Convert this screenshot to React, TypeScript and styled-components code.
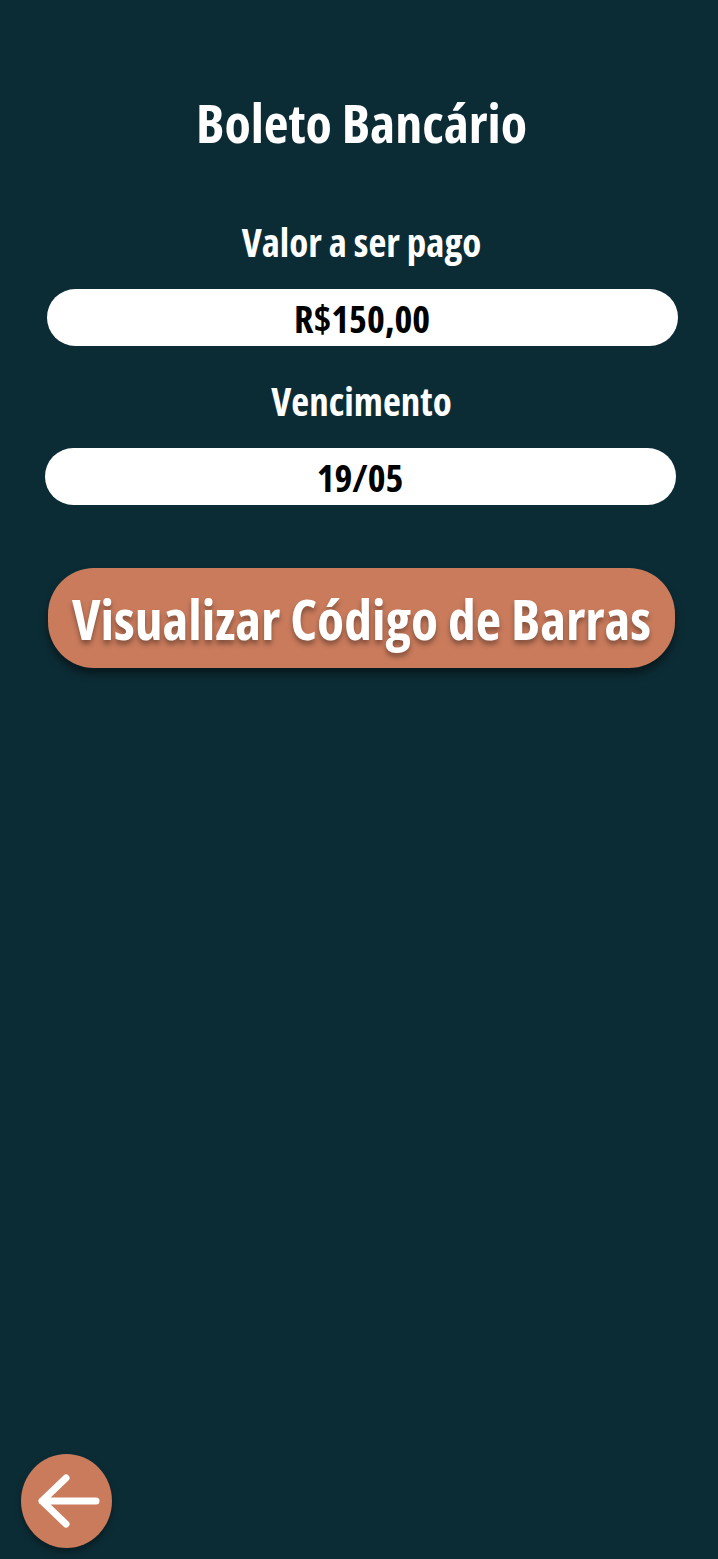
import React from "react";
import styled, { createGlobalStyle } from "styled-components";

const Global = createGlobalStyle`
  html, body { margin: 0; padding: 0; background: #0c2c35; }
  body { font-family: "Open Sans", "Noto Sans", sans-serif; font-stretch: 75%; }
  * { box-sizing: border-box; }
`;

const Screen = styled.div`
  width: 718px;
  height: 1559px;
  background: #0c2c35;
  display: flex;
  flex-direction: column;
`;

const Content = styled.main`
  flex: 1;
  display: flex;
  flex-direction: column;
  align-items: center;
  padding: 89px 41px 0 46px;
`;

const Title = styled.h1`
  margin: 0;
  color: #fff;
  font-size: 54px;
  font-weight: 700;
  font-stretch: 75%;
  line-height: 66px;
`;

const Label = styled.div<{ $top: number }>`
  margin-top: ${(p) => p.$top}px;
  color: #fff;
  font-size: 39px;
  font-weight: 700;
  font-stretch: 75%;
  line-height: 44px;
`;

const Field = styled.div<{ $shift: number }>`
  width: 631px;
  height: 57px;
  margin-top: 25px;
  margin-left: ${(p) => p.$shift}px;
  border-radius: 29px;
  background: #fff;
  display: flex;
  align-items: center;
  justify-content: center;
  color: #000;
  font-size: 38px;
  font-weight: 700;
  font-stretch: 75%;
`;

const ActionButton = styled.button`
  margin-top: 63px;
  width: 627px;
  height: 100px;
  border: none;
  border-radius: 46px;
  background: #c97b5c;
  color: #fff;
  font-family: inherit;
  font-size: 55.5px;
  font-weight: 700;
  font-stretch: 75%;
  white-space: nowrap;
  box-shadow: 0 6px 8px rgba(0, 0, 0, 0.45);
  text-shadow: 0 4px 5px rgba(0, 0, 0, 0.35);
  display: flex;
  align-items: center;
  justify-content: center;
  padding: 0;
`;

const Footer = styled.footer`
  padding: 0 0 11px 21px;
`;

const BackButton = styled.button`
  width: 91px;
  height: 94px;
  border-radius: 50%;
  border: none;
  background: #c97b5c;
  box-shadow: 0 4px 6px rgba(0, 0, 0, 0.35);
  display: flex;
  align-items: center;
  justify-content: center;
  padding: 0;
`;

export default function App() {
  return (
    <Screen>
      <Global />
      <Content>
        <Title>Boleto Bancário</Title>
        <Label $top={65}>Valor a ser pago</Label>
        <Field $shift={1}>R$150,00</Field>
        <Label $top={33}>Vencimento</Label>
        <Field $shift={-3}>19/05</Field>
        <ActionButton>Visualizar Código de Barras</ActionButton>
      </Content>
      <Footer>
        <BackButton aria-label="Voltar">
          <svg width="70" height="60" viewBox="0 0 70 60">
            <path
              d="M64 30 H10 M34 7 L10 30 L34 53"
              fill="none"
              stroke="#fff"
              strokeWidth="7"
              strokeLinecap="round"
              strokeLinejoin="round"
            />
          </svg>
        </BackButton>
      </Footer>
    </Screen>
  );
}
